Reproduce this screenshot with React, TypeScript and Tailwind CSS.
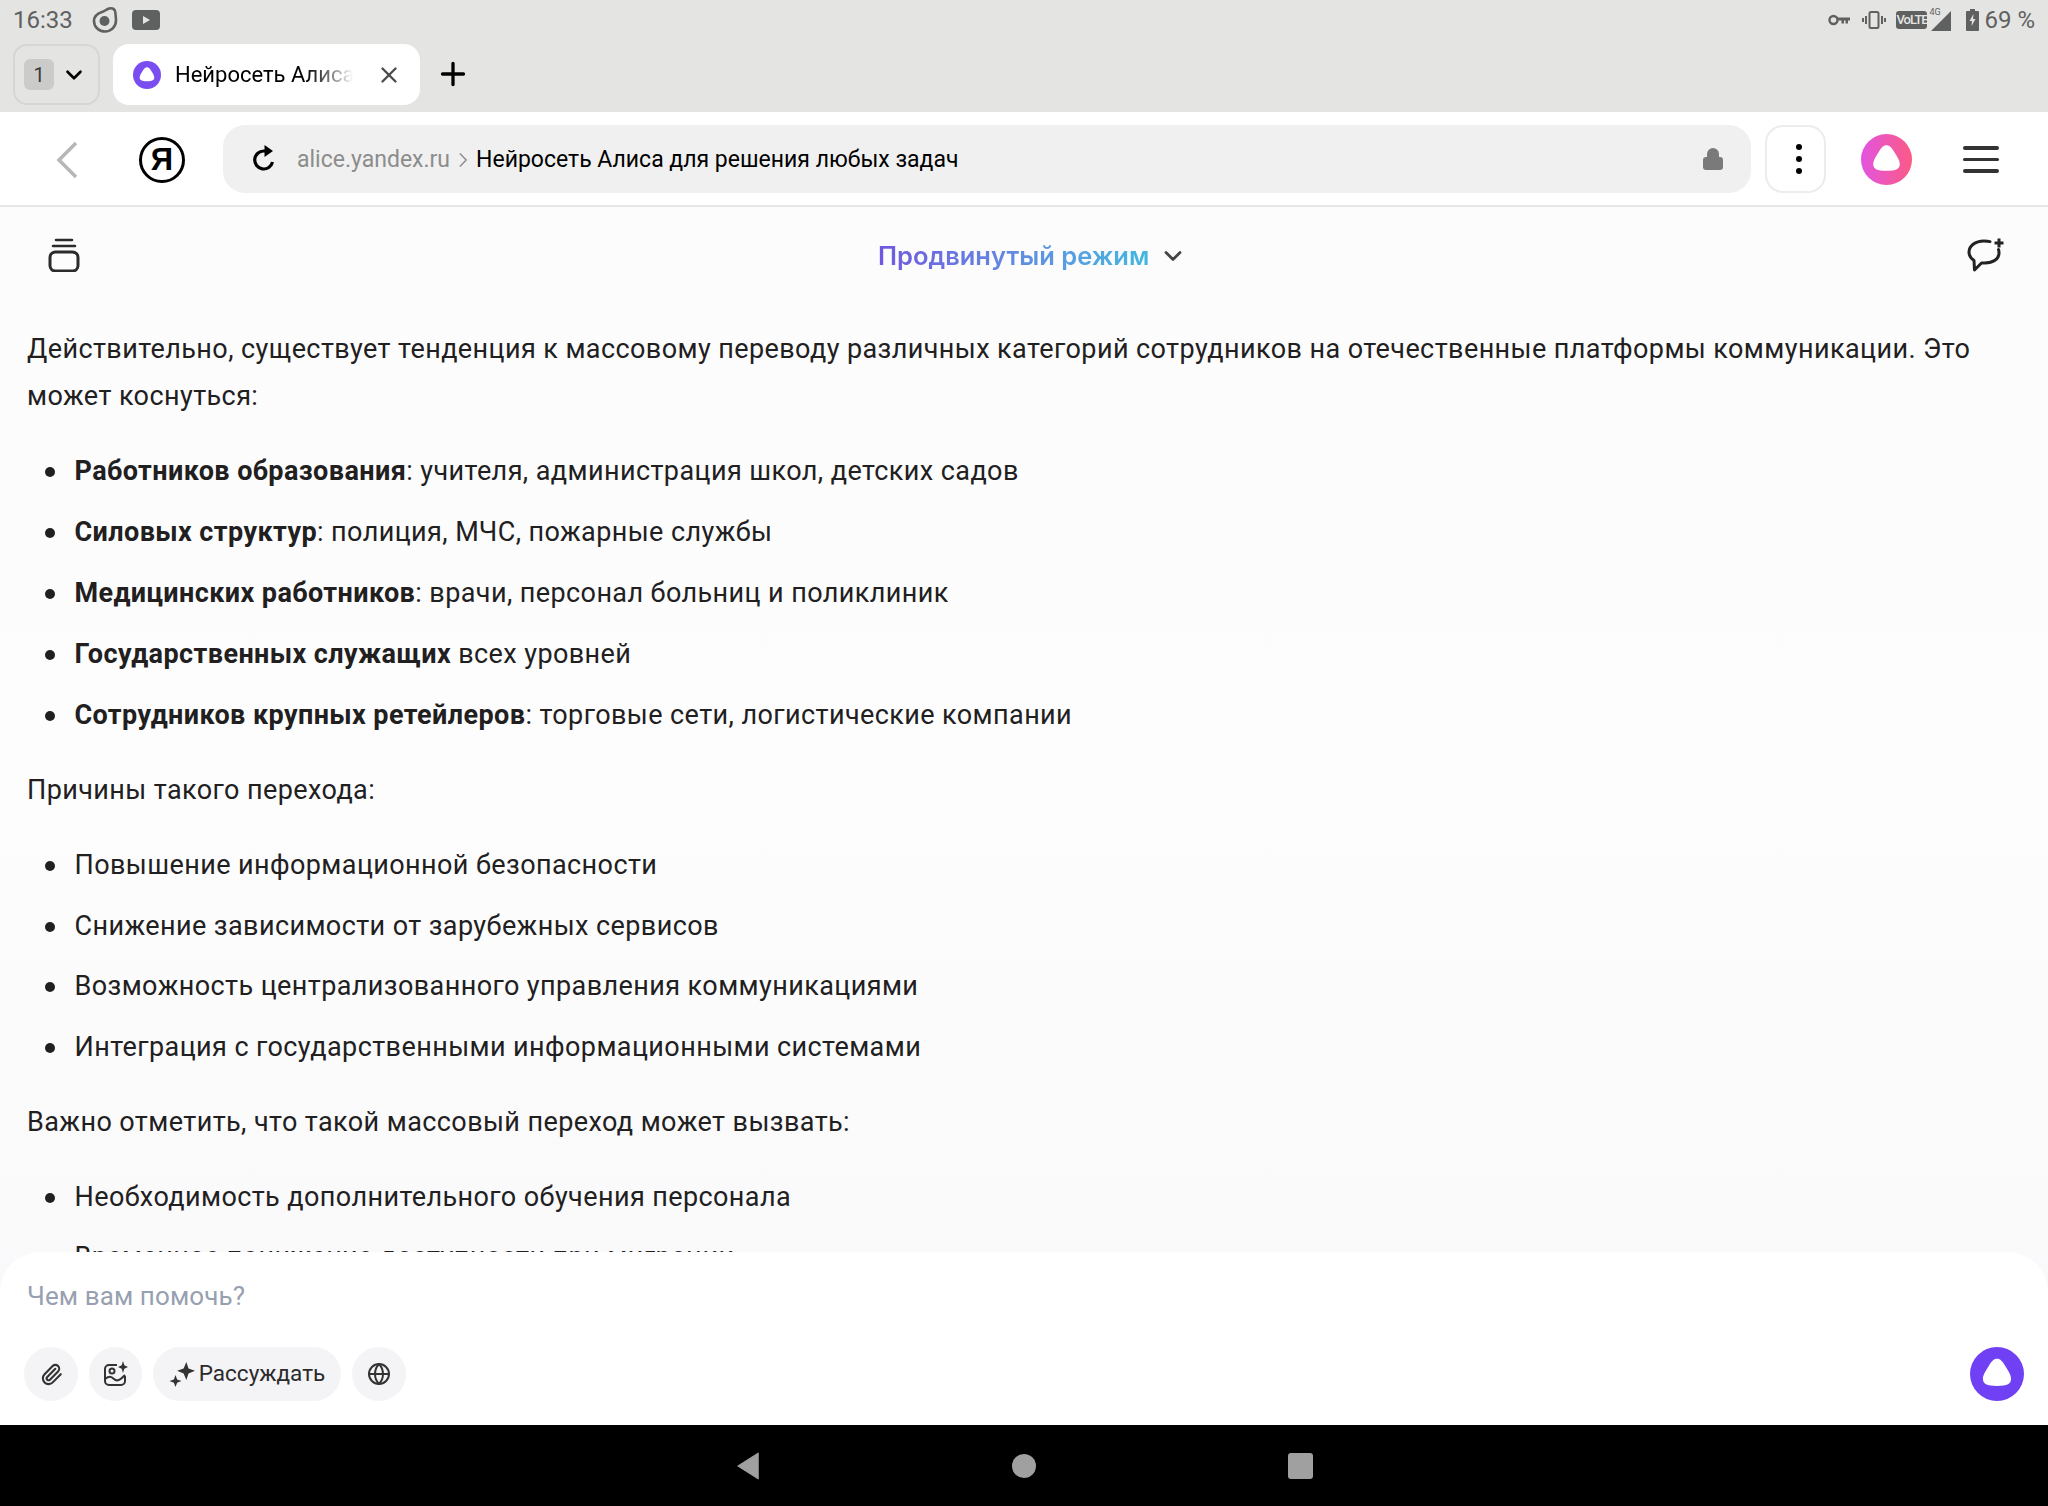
import { ChevronDown, Plus, X, Lock, Paperclip, Globe } from 'lucide-react'
import type { ReactNode } from 'react'

const font = { fontFamily: 'Roboto, sans-serif' }

const group1 = [
  ['Работников образования', ': учителя, администрация школ, детских садов'],
  ['Силовых структур', ': полиция, МЧС, пожарные службы'],
  ['Медицинских работников', ': врачи, персонал больниц и поликлиник'],
  ['Государственных служащих', ' всех уровней'],
  ['Сотрудников крупных ретейлеров', ': торговые сети, логистические компании'],
]

const group2 = [
  'Повышение информационной безопасности',
  'Снижение зависимости от зарубежных сервисов',
  'Возможность централизованного управления коммуникациями',
  'Интеграция с государственными информационными системами',
]

const group3 = ['Необходимость дополнительного обучения персонала', 'Временное понижение доступности при миграции']

const blob = 'M24 10.500c3 0 5 2.400 7.200 6.200 2.600 4.400 5.300 8 5.300 11.600 0 4.400-3.200 6.400-12.500 6.400s-12.500-2-12.500-6.400c0-3.600 2.700-7.200 5.300-11.600 2.200-3.800 4.200-6.200 7.200-6.200z'

function AliceLogo({ className, fill }: { className?: string; fill: string }) {
  return (
    <svg viewBox="0 0 48 48" className={className}>
      <circle cx="24" cy="24" r="24" fill={fill} />
      <path d={blob} fill="#fff" />
    </svg>
  )
}

function StatusBar() {
  return (
    <div className="h-[40px] flex items-center justify-between pl-[13px] pr-[13px] text-[#5f6060] text-[24px]">
      <div className="flex items-center">
        <span>16:33</span>
        <svg viewBox="0 0 26 28" className="w-[26px] h-[28px] ml-[19px]">
          <path d="M17 2.500c4-1 6.500 1 6.500 5 0 2 .5 4 .5 7 0 6.500-5 11-11 11-6 0-11-4.500-11-10.500 0-6 5-8 8-9 3-1 4-2.500 7-3.500z" fill="none" stroke="#5f6060" strokeWidth="2.600" />
          <circle cx="12.500" cy="15" r="5" fill="#5f6060" />
        </svg>
        <svg viewBox="0 0 28 20" className="w-[28px] h-[20px] ml-[14px]">
          <rect width="28" height="20" rx="4" fill="#5f6060" />
          <path d="M11 6l7 4-7 4z" fill="#e4e4e3" />
        </svg>
      </div>
      <div className="flex items-center">
        <svg viewBox="0 0 22 12" className="w-[22px] h-[12px]">
          <circle cx="5.500" cy="6" r="4" fill="none" stroke="#5f6060" strokeWidth="2.400" />
          <path d="M9 3.500h13v3h-2v3h-2.500v-3h-1.500v3h-2.500v-3h-4.500z" fill="#5f6060" />
        </svg>
        <svg viewBox="0 0 24 18" className="w-[24px] h-[18px] ml-[12px]">
          <rect x="7.500" y="1" width="9" height="16" rx="1.500" fill="none" stroke="#5f6060" strokeWidth="2" />
          <path d="M4 5v8M1 7v4M20 5v8M23 7v4" stroke="#5f6060" strokeWidth="2" />
        </svg>
        <div className="ml-[10px] w-[31px] h-[18px] bg-[#5f6060] rounded-[3px] text-[#e4e4e3] text-[13px] leading-[18px] text-center font-medium tracking-[-1px]">VoLTE</div>
        <div className="relative w-[25px] h-[22px]">
          <svg viewBox="0 0 22 21" className="absolute right-0 bottom-0 w-[21px] h-[20px]">
            <path d="M21 0v21H0z" fill="#5f6060" />
          </svg>
          <span className="absolute left-[2px] top-[-2px] text-[9px] leading-[10px]">4G</span>
        </div>
        <svg viewBox="0 0 13 22" className="w-[13px] h-[22px] ml-[14px]">
          <path d="M4 0h5v2h3a1 1 0 011 1v18a1 1 0 01-1 1H1a1 1 0 01-1-1V3a1 1 0 011-1h3z" fill="#5f6060" />
          <path d="M7.500 5L3.500 12h2.500l-.5 5 4-7H7z" fill="#e4e4e3" />
        </svg>
        <span className="ml-[5px]">69 %</span>
      </div>
    </div>
  )
}

function TabStrip() {
  return (
    <div className="h-[72px] flex items-start pl-[13px] pt-[4px]">
      <div className="w-[87px] h-[61px] rounded-[14px] border-2 border-[#d6d6d5] flex items-center pl-[9px]">
        <div className="w-[30px] h-[31px] bg-[#cbcbca] rounded-[6px] text-[#3a3a3a] text-[20px] flex items-center justify-center">1</div>
        <ChevronDown className="w-[26px] h-[26px] ml-[7px] text-black" strokeWidth={2.400} />
      </div>
      <div className="ml-[13px] w-[307px] h-[61px] bg-white rounded-[16px] flex items-center pl-[20px] relative">
        <AliceLogo className="w-[28px] h-[28px]" fill="#7a4df0" />
        <span className="ml-[14px] text-[22px] leading-[30px] text-black w-[178px] overflow-hidden whitespace-nowrap bg-gradient-to-r from-black from-70% to-[#ffffff] bg-clip-text [-webkit-text-fill-color:transparent]">Нейросеть Алиса</span>
        <X className="w-[26px] h-[26px] ml-[23px] text-[#4b4b4b]" strokeWidth={2.200} />
      </div>
      <Plus className="w-[36px] h-[36px] ml-[15px] mt-[12px] text-black" strokeWidth={2.200} />
    </div>
  )
}

function Toolbar() {
  return (
    <div className="h-[95px] bg-white border-b-2 border-[#e6e6e6] flex items-start">
      <svg viewBox="0 0 22 38" className="w-[22px] h-[38px] ml-[56px] mt-[29px]">
        <path d="M20 2L3 19l17 17" fill="none" stroke="#b6b6b6" strokeWidth="3.500" />
      </svg>
      <div className="ml-[61px] mt-[25px] w-[46px] h-[46px] rounded-full border-[3px] border-black flex items-center justify-center font-bold text-[31px] text-black" style={{ fontFamily: '"Liberation Sans", sans-serif' }}>Я</div>
      <div className="ml-[38px] mt-[13px] w-[1528px] h-[68px] bg-[#f0f0f0] rounded-[22px] flex items-center pl-[28px] pr-[28px]">
        <svg viewBox="0 0 26 28" className="w-[26px] h-[28px]">
          <path d="M21.500 17a9 9 0 11-8.500-11h3" fill="none" stroke="#000" strokeWidth="3.200" />
          <path d="M13.500 0l8.500 6-8.500 6z" fill="#000" />
        </svg>
        <span className="ml-[20px] pt-[3px] text-[23px] text-[#8c8c8c]">alice.yandex.ru</span>
        <svg viewBox="0 0 10 18" className="w-[8px] h-[16px] ml-[9px] mt-[2px]">
          <path d="M1 1l8 8-8 8" fill="none" stroke="#8c8c8c" strokeWidth="1.800" />
        </svg>
        <span className="ml-[9px] pt-[3px] text-[23px] text-black">Нейросеть Алиса для решения любых задач</span>
        <Lock className="w-[24px] h-[26px] ml-auto mr-[-2px] text-[#7a7a7a]" fill="#7a7a7a" strokeWidth={2} />
      </div>
      <div className="ml-[14px] mt-[13px] w-[61px] h-[68px] border-2 border-[#ececec] rounded-[18px] flex flex-col items-center justify-center gap-[6px] pl-[6px]">
        <div className="w-[6px] h-[6px] rounded-full bg-black" />
        <div className="w-[6px] h-[6px] rounded-full bg-black" />
        <div className="w-[6px] h-[6px] rounded-full bg-black" />
      </div>
      <svg viewBox="0 0 48 48" className="w-[51px] h-[51px] ml-[35px] mt-[22px]">
        <defs>
          <linearGradient id="alicePink" x1="0" x2="1" y1="0" y2="0">
            <stop offset="0" stopColor="#e254e0" />
            <stop offset="1" stopColor="#fb5a85" />
          </linearGradient>
        </defs>
        <circle cx="24" cy="24" r="24" fill="url(#alicePink)" />
        <path d={blob} fill="#fff" />
      </svg>
      <div className="ml-[51px] mt-[34px] w-[36px] flex flex-col gap-[8px]">
        <div className="h-[3.500px] bg-[#333] rounded-full" />
        <div className="h-[3.500px] bg-[#333] rounded-full" />
        <div className="h-[3.500px] bg-[#333] rounded-full" />
      </div>
    </div>
  )
}

function ChatHeader() {
  return (
    <div className="h-[76px] flex items-center justify-between pl-[48px] pr-[42px] pt-[20px] relative">
      <svg viewBox="0 0 32 34" className="w-[32px] h-[34px]">
        <path d="M8 2h16M5 8h22" stroke="#2b2b2b" strokeWidth="2.600" strokeLinecap="round" />
        <rect x="2" y="14" width="28" height="19" rx="5.500" fill="none" stroke="#2b2b2b" strokeWidth="3" />
      </svg>
      <div className="absolute left-[878px] top-[31px] flex items-center">
        <span className="text-[25.500px] leading-[36px] font-semibold bg-gradient-to-r from-[#6f57e0] to-[#3fb8e0] bg-clip-text text-transparent" style={{ fontFamily: 'Inter, sans-serif' }}>Продвинутый режим</span>
        <ChevronDown className="w-[28px] h-[28px] ml-[10px] text-[#444]" strokeWidth={2.400} />
      </div>
      <svg viewBox="0 0 40 36" className="w-[40px] h-[36px]">
        <path d="M24 4.600C22.500 4.200 20 4 18 4 9 4 3 9 3 15c0 4 2 6.500 5 8.500l.5 9.500 7-7h3.500c8 0 14-4 14-10 0-1.200 0-2.500-.5-3.500" fill="none" stroke="#222" strokeWidth="3" strokeLinecap="round" strokeLinejoin="round" />
        <path d="M33 1.500v9M28.500 6h9" stroke="#222" strokeWidth="3" />
      </svg>
    </div>
  )
}

function Bullets({ items, gap }: { items: ReactNode[]; gap: string }) {
  return (
    <ul className={`pl-[18px] flex flex-col ${gap} mb-[28px]`}>
      {items.map((item, i) => (
        <li key={i} className="flex">
          <span className="w-[10px] h-[10px] mt-[19px] mr-[19.500px] rounded-full bg-[#21201f] shrink-0" />
          <span>{item}</span>
        </li>
      ))}
    </ul>
  )
}

function Composer() {
  const pill = 'h-[54px] rounded-full bg-[#f4f4f6] flex items-center justify-center'
  return (
    <div className="relative z-10 -mt-[23px] h-[173px] bg-white rounded-t-[40px] flex flex-col pl-[24px] pr-[24px]">
      <div className="pl-[3px] pt-[24px] text-[26px] leading-[40px] tracking-[0.1px] text-[#97a0b0]">Чем вам помочь?</div>
      <div className="mt-[31px] flex items-center gap-[11px]">
        <div className={`${pill} w-[54px]`}>
          <Paperclip className="w-[23px] h-[23px] text-[#333]" strokeWidth={2.200} />
        </div>
        <div className={`${pill} w-[53px]`}>
          <svg viewBox="0 0 26 26" className="w-[26px] h-[26px]">
            <path d="M14 4H6a4 4 0 00-4 4v12a4 4 0 004 4h12a4 4 0 004-4v-5" fill="none" stroke="#333" strokeWidth="2" />
            <circle cx="9" cy="10" r="2.500" fill="none" stroke="#333" strokeWidth="2" />
            <path d="M2 18c4-3 6-3 9 0s6 1 11-4" fill="none" stroke="#333" strokeWidth="2" />
            <path d="M20 0l1.300 4.200L25 6l-3.700 1.800L20 12l-1.300-4.200L15 6l3.700-1.800z" fill="#333" />
          </svg>
        </div>
        <div className={`${pill} w-[188px]`}>
          <svg viewBox="0 0 24 24" className="w-[26px] h-[26px]">
            <path d="M16 1l2 6 6 2-6 2.500-2 6-2.500-6-6-2.500 6-2z" fill="#333" />
            <path d="M6 13l1.500 4 4 1.500-4 1.500-1.500 4-1.500-4-4-1.500 4-1.500z" fill="#333" />
          </svg>
          <span className="ml-[4px] text-[22.500px] text-[#2b2b2b]">Рассуждать</span>
        </div>
        <div className={`${pill} w-[54px]`}>
          <Globe className="w-[24px] h-[24px] text-[#333]" strokeWidth={2} />
        </div>
        <AliceLogo className="w-[54px] h-[54px] ml-auto" fill="#7040f4" />
      </div>
    </div>
  )
}

export default function App() {
  return (
    <div className="w-[2048px] h-[1506px] flex flex-col overflow-hidden bg-[#e4e4e3]" style={font}>
      <StatusBar />
      <TabStrip />
      <Toolbar />
      <div className="flex-1 flex flex-col min-h-0 bg-gradient-to-b from-[#fcfcfc] via-[#fdfdfd] to-[#f8f8fa]">
        <ChatHeader />
        <div className="flex-1 min-h-0 overflow-hidden px-[27px] pt-[43px] text-[27px] leading-[47px] tracking-[0.41px] text-[#21201f]">
          <p className="mb-[28px]">
            Действительно, существует тенденция к массовому переводу различных категорий сотрудников на отечественные платформы коммуникации. Это может коснуться:
          </p>
          <Bullets
            gap="gap-[14px]"
            items={group1.map(([bold, rest]) => (
              <>
                <b className="font-bold">{bold}</b>
                {rest}
              </>
            ))}
          />
          <p className="mb-[28px]">Причины такого перехода:</p>
          <Bullets gap="gap-[13.600px]" items={group2} />
          <p className="mb-[28px]">Важно отметить, что такой массовый переход может вызвать:</p>
          <Bullets gap="gap-[13px]" items={group3} />
        </div>
        <Composer />
      </div>
      <div className="h-[81px] bg-black flex items-center justify-center">
        <svg viewBox="0 0 24 30" className="w-[24px] h-[28px] mr-[252px]">
          <path d="M23 1v28L1 15z" fill="#a0a0a0" stroke="#a0a0a0" strokeLinejoin="round" />
        </svg>
        <div className="w-[24px] h-[24px] rounded-full bg-[#a0a0a0]" />
        <div className="ml-[252px] w-[25px] h-[26px] rounded-[3px] bg-[#a0a0a0]" />
      </div>
    </div>
  )
}
